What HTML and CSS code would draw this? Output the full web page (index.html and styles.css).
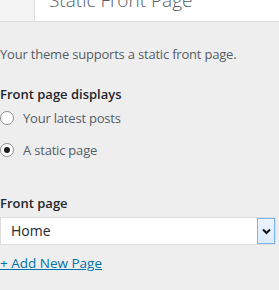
FILE: index.html
```html
<!DOCTYPE html>
<html lang="en">
<head>
    <meta charset="UTF-8">
    <title>Static Front Page</title>
    <link rel="stylesheet" href="styles.css">
</head>
<body>
    <div class="panel-head">
        <div class="back-strip"></div>
        <h2 class="panel-title">Static Front Page</h2>
    </div>

    <div class="panel-body">
        <p class="desc">Your theme supports a static front page.</p>

        <div class="field">
            <span class="field-title">Front page displays</span>
            <label class="radio-row">
                <span class="radio"></span>
                Your latest posts
            </label>
            <label class="radio-row">
                <span class="radio checked"></span>
                A static page
            </label>
        </div>

        <div class="field page-field">
            <span class="field-title">Front page</span>
            <div class="select">
                <span class="select-value">Home</span>
                <span class="select-btn">
                    <svg width="9" height="7" viewBox="0 0 9 7"><path d="M1 1.5 L4.5 5 L8 1.5" fill="none" stroke="#111" stroke-width="2"/></svg>
                </span>
            </div>
            <a class="add-link" href="#">+ Add New Page</a>
        </div>
    </div>
</body>
</html>
```

FILE: styles.css
```css
body {
    margin: 0;
    background-color: #eeeeee;
    font-family: "Open Sans", "Noto Sans", sans-serif;
    font-size: 13px;
    color: #555d66;
}
.panel-head {
    display: flex;
    height: 21px;
    border-bottom: 1px solid #dddddd;
    overflow: hidden;
}
.back-strip {
    width: 34px;
    background-color: #f3f3f3;
    border-right: 1px solid #dddddd;
}
.panel-title {
    flex: 1;
    margin: 0;
    padding-left: 14px;
    background-color: #ffffff;
    font-size: 19px;
    font-weight: 300;
    color: #555d66;
    line-height: 20px;
    margin-top: -10px;
}
.panel-body {
    padding-top: 22px;
}
.desc {
    margin: 0 0 20px;
    line-height: 20px;
    letter-spacing: -0.2px;
}
.field-title {
    display: block;
    font-size: 13px;
    font-weight: 600;
    color: #23282d;
    line-height: 20px;
    margin-bottom: 4px;
}
.radio-row {
    display: flex;
    align-items: center;
    gap: 9px;
    height: 20px;
    margin-bottom: 12px;
    letter-spacing: -0.2px;
}
.radio {
    width: 12px;
    height: 12px;
    border: 1px solid #8c8f94;
    border-radius: 50%;
    background-color: #ffffff;
    display: flex;
    align-items: center;
    justify-content: center;
}
.radio.checked::before {
    content: "";
    width: 6px;
    height: 6px;
    border-radius: 50%;
    background-color: #1e1e1e;
}
.page-field {
    margin-top: 33px;
}
.select {
    display: flex;
    width: 274px;
    height: 26px;
    border: 1px solid #dddddd;
    background-color: #ffffff;
}
.select-value {
    flex: 1;
    padding-left: 10px;
    line-height: 26px;
    color: #23282d;
    font-size: 14px;
}
.select-btn {
    width: 16px;
    border: 1px solid #7eb4ea;
    background: linear-gradient(#ecf4fc, #dcecfc);
    display: flex;
    align-items: center;
    justify-content: center;
}
.add-link {
    display: inline-block;
    margin-top: 9px;
    color: #0073aa;
    text-decoration: underline;
    font-size: 13.5px;
}
```
